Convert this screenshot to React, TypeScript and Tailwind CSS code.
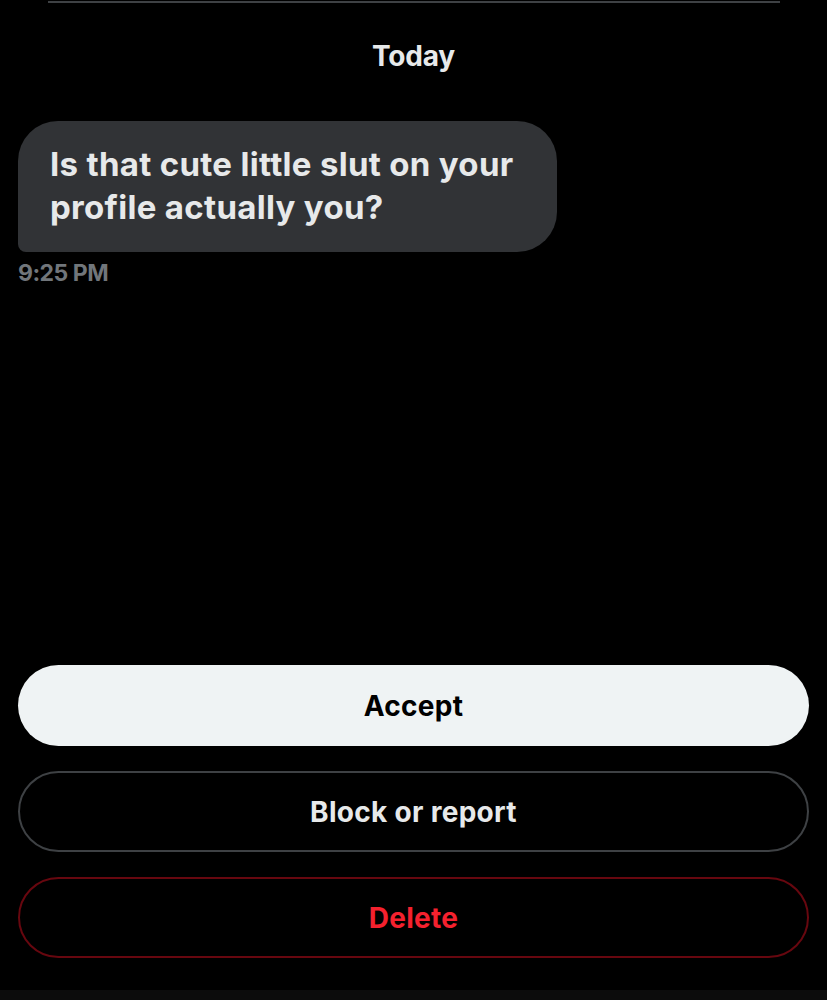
export default function App() {
  return (
    <div
      className="w-[827px] h-[1000px] bg-black flex flex-col overflow-hidden"
      style={{ fontFamily: 'Inter, "Liberation Sans", sans-serif' }}
    >
      {/* header divider */}
      <div className="pt-px pl-[48px] pr-[47px]">
        <div className="h-[2px] bg-[#3e4144]" />
      </div>

      {/* date label */}
      <div className="mt-[36px] text-center text-[28px] leading-[34px] font-bold text-[#e7e9ea] tracking-[-0.2px]">
        Today
      </div>

      {/* message */}
      <div className="mt-[48px] pl-[18px]">
        <div className="w-[539px] h-[131px] bg-[#313336] rounded-[40px] rounded-bl-[8px] pl-[32px] pr-[10px] pt-[22px]">
          <p className="text-[33px] leading-[43px] font-bold text-[#e7e9ea] tracking-[0.3px]">
            Is that cute little slut on your profile actually you?
          </p>
        </div>
        <div className="mt-[8px] text-[23px] leading-[26px] font-bold text-[#71767b] tracking-[-0.5px]">
          9:25 PM
        </div>
      </div>

      <div className="flex-1" />

      {/* actions */}
      <div className="px-[18px] flex flex-col gap-[25px] pb-[32px]">
        <button className="h-[81px] rounded-full bg-[#eff3f4] text-black text-[28px] font-bold tracking-[0.3px]">
          Accept
        </button>
        <button className="h-[81px] rounded-full border-2 border-[#3e4144] text-[#e7e9ea] text-[28px] font-bold tracking-[0.3px]">
          Block or report
        </button>
        <button className="h-[81px] rounded-full border-2 border-[#67070f] text-[#f4212e] text-[28px] font-bold tracking-[0.3px]">
          Delete
        </button>
      </div>
      <div className="h-[10px] bg-[#0c0c0c]" />
    </div>
  );
}
